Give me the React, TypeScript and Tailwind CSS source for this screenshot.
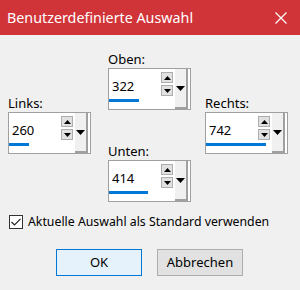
import React from "react";

const font = { fontFamily: '"Noto Sans", "Open Sans", sans-serif' };

function Tri({ w, h, up }: { w: number; h: number; up?: boolean }) {
  return (
    <svg width={w} height={h} viewBox={`0 0 ${w} ${h}`} className="block">
      {up ? (
        <polygon points={`0,${h} ${w},${h} ${w / 2},0`} fill="#000" />
      ) : (
        <polygon points={`0,0 ${w},0 ${w / 2},${h}`} fill="#000" />
      )}
    </svg>
  );
}

function Spin({ label, value, bar }: { label: string; value: string; bar: number }) {
  return (
    <div className="flex flex-col">
      <div className="h-[17px] text-[13px] leading-[16px] text-[#000]">{label}</div>
      <div className="w-[83px] h-[42px] border border-[#a0a0a0] bg-white flex">
        <div className="w-[51px] flex flex-col">
          <div className="pl-[3px] pt-[9px] h-[25px] text-[13px] leading-[16px] text-[#000]">{value}</div>
          <div className="mt-[5px] h-[3px] bg-[#0078d7]" style={{ width: bar }} />
        </div>
        <div className="ml-[1px] pt-[3px] flex flex-col gap-[2px]">
          <div className="w-[12px] h-[11px] bg-[#e1e1e1] border border-[#adadad] flex items-center justify-center">
            <Tri w={7} h={4} up />
          </div>
          <div className="w-[12px] h-[11px] bg-[#e1e1e1] border border-[#adadad] flex items-center justify-center">
            <Tri w={7} h={4} />
          </div>
        </div>
        <div className="ml-[2px] w-[13px] h-[40px] bg-[#f0f0f0] border-r-2 border-b-2 border-r-[#a0a0a0] border-b-[#a0a0a0] flex items-center justify-center">
          <Tri w={9} h={5} />
        </div>
      </div>
    </div>
  );
}

export default function App() {
  return (
    <div className="w-[300px] h-[290px] bg-[#f0f0f0] flex flex-col overflow-hidden" style={font}>
      <div className="h-[35px] bg-[#d13438] flex items-center justify-between pl-[7px] pr-[13px]">
        <span className="text-white text-[14.3px] leading-[20px]">Benutzerdefinierte Auswahl</span>
        <svg width="12" height="12" viewBox="0 0 12 12" className="block">
          <path d="M0.5 0.5 L11.5 11.5 M11.5 0.5 L0.5 11.5" stroke="#fff" strokeWidth="1.2" />
        </svg>
      </div>
      <div className="flex pl-[8px]">
        <div className="pt-[60px]">
          <Spin label="Links:" value="260" bar={20} />
        </div>
        <div className="ml-[17px] pt-[16px] flex flex-col gap-[33px]">
          <Spin label="Oben:" value="322" bar={30} />
          <Spin label="Unten:" value="414" bar={39} />
        </div>
        <div className="ml-[14px] pt-[60px]">
          <Spin label="Rechts:" value="742" bar={60} />
        </div>
      </div>
      <div className="mt-[12px] pl-[9px] flex items-center gap-[5px]">
        <div className="w-[14px] h-[14px] border border-[#333] bg-white flex items-center justify-center">
          <svg width="10" height="8" viewBox="0 0 10 8" className="block">
            <path d="M0.5 4 L3.5 7 L9.5 0.8" stroke="#222" strokeWidth="1.2" fill="none" />
          </svg>
        </div>
        <span className="text-[12.3px] leading-[16px] text-[#000]">Aktuelle Auswahl als Standard verwenden</span>
      </div>
      <div className="mt-[19px] pl-[56px] flex gap-[15px]">
        <div className="w-[86px] h-[27px] border border-[#0078d7] bg-[#e5f1fb] flex items-center justify-center text-[13px] text-[#000]">
          OK
        </div>
        <div className="w-[86px] h-[27px] border border-[#adadad] bg-[#e1e1e1] flex items-center justify-center text-[13px] text-[#000]">
          Abbrechen
        </div>
      </div>
    </div>
  );
}
